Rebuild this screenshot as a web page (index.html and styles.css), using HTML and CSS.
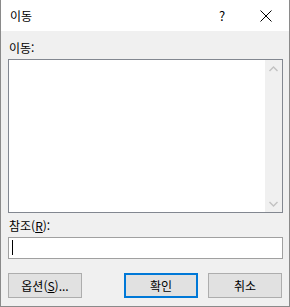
FILE: index.html
```html
<!DOCTYPE html>
<html lang="ko">
<head>
<meta charset="utf-8">
<link rel="stylesheet" href="styles.css">
</head>
<body>
<div class="window">
  <div class="titlebar">
    <span class="title">이동</span>
    <span class="help">?</span>
    <span class="close">
      <svg width="12" height="12" viewBox="0 0 12 12"><path d="M0.5 0.5 L11.5 11.5 M11.5 0.5 L0.5 11.5" stroke="#000" stroke-width="1" fill="none"/></svg>
    </span>
  </div>
  <div class="body">
    <div class="label first">이동:</div>
    <div class="listbox">
      <div class="listarea"></div>
      <div class="scrollbar">
        <div class="arrow">
          <svg width="9" height="6" viewBox="0 0 9 6"><path d="M0.5 5 L4.5 1 L8.5 5" stroke="#c2c2c2" stroke-width="1.4" fill="none"/></svg>
        </div>
        <div class="track"></div>
        <div class="arrow">
          <svg width="9" height="6" viewBox="0 0 9 6"><path d="M0.5 1 L4.5 5 L8.5 1" stroke="#c2c2c2" stroke-width="1.4" fill="none"/></svg>
        </div>
      </div>
    </div>
    <div class="label second">참조(<u>R</u>):</div>
    <div class="input"><span class="caret"></span></div>
    <div class="buttons">
      <div class="btn">옵션(<u>S</u>)...</div>
      <div class="spacer"></div>
      <div class="btn default">확인</div>
      <div class="btn cancel">취소</div>
    </div>
  </div>
</div>
</body>
</html>
```
FILE: styles.css
```css
* { box-sizing: border-box; }
html, body { margin: 0; padding: 0; }
body {
  font-family: "Noto Sans CJK KR", "Noto Sans", sans-serif;
  font-size: 12px;
  color: #000;
  background: #fff;
}
.window {
  width: 290px;
  height: 307px;
  border: 1px solid #8a8a8a;
  border-top: none;
  display: flex;
  flex-direction: column;
  background: #f0f0f0;
}
.titlebar {
  height: 31px;
  background: #fff;
  display: flex;
  align-items: center;
  flex: none;
}
.title {
  padding-left: 9px;
  line-height: 14px;
  flex: 1;
}
.help {
  width: 14px;
  text-align: center;
  line-height: 14px;
  font-size: 13px;
  margin-right: 31px;
}
.close {
  width: 12px;
  height: 12px;
  margin-right: 17px;
  display: flex;
}
.body {
  flex: 1;
  padding: 0 6px 0 7px;
  display: flex;
  flex-direction: column;
}
.label {
  line-height: 14px;
  height: 14px;
  padding-left: 1px;
}
.label.first { margin-top: 10px; margin-bottom: 4px; }
.label.second { margin-top: 6px; margin-bottom: 4px; }
u { text-decoration-thickness: 1px; text-underline-offset: 1px; }
.listbox {
  height: 154px;
  border: 1px solid #828790;
  background: #fff;
  display: flex;
}
.listarea { flex: 1; }
.scrollbar {
  width: 17px;
  background: #f0f0f0;
  display: flex;
  flex-direction: column;
}
.arrow {
  height: 17px;
  display: flex;
  align-items: center;
  justify-content: center;
}
.track { flex: 1; }
.input {
  height: 22px;
  border: 1px solid #a0a0a0;
  background: #fff;
  padding: 2px 3px;
}
.caret {
  display: block;
  width: 1px;
  height: 15px;
  background: #000;
}
.buttons {
  margin-top: 14px;
  display: flex;
}
.spacer { width: 42px; }
.btn {
  width: 74px;
  height: 25px;
  border: 1px solid #adadad;
  background: #e1e1e1;
  display: flex;
  align-items: center;
  justify-content: center;
  line-height: 14px;
}
.btn.default { border: 2px solid #0078d7; }
.btn.cancel { margin-left: 10px; }
```
